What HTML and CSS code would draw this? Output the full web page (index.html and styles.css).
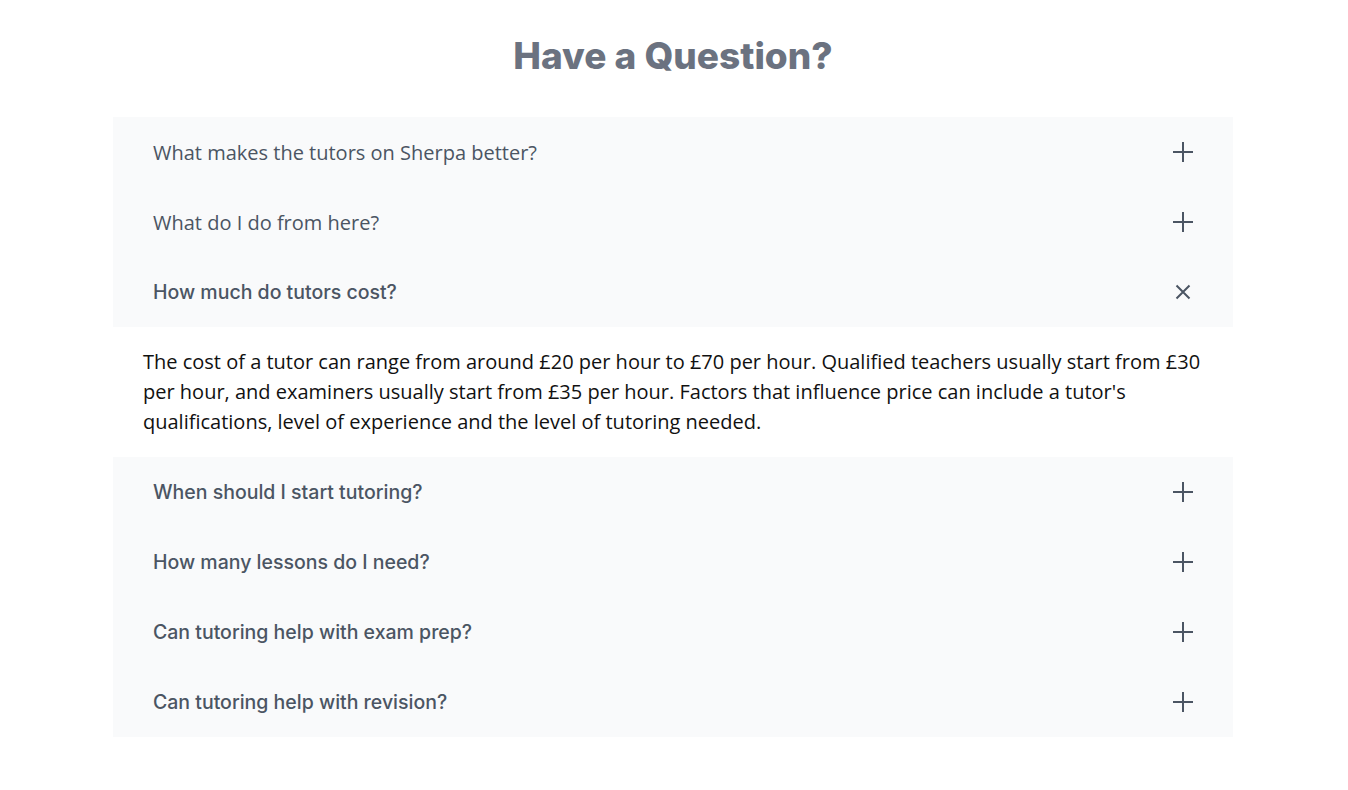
FILE: index.html
```html
<!DOCTYPE html>
<html lang="en">
<head>
<meta charset="utf-8">
<title>Have a Question?</title>
<link rel="stylesheet" href="styles.css">
</head>
<body>
<section class="faq">
  <h2 class="faq-title">Have a Question?</h2>
  <div class="faq-list">
    <div class="faq-item">
      <span class="q q-open">What makes the tutors on Sherpa better?</span>
      <svg class="icon" viewBox="0 0 20 20"><path d="M10 0v20M0 10h20"/></svg>
    </div>
    <div class="faq-item">
      <span class="q q-open">What do I do from here?</span>
      <svg class="icon" viewBox="0 0 20 20"><path d="M10 0v20M0 10h20"/></svg>
    </div>
    <div class="faq-item">
      <span class="q">How much do tutors cost?</span>
      <svg class="icon" viewBox="0 0 20 20"><path d="M3.5 3.5l13 13M16.5 3.5l-13 13"/></svg>
    </div>
    <div class="faq-answer">
      <p>The cost of a tutor can range from around £20 per hour to £70 per hour. Qualified teachers usually start from £30 per hour, and examiners usually start from £35 per hour. Factors that influence price can include a tutor's qualifications, level of experience and the level of tutoring needed.</p>
    </div>
    <div class="faq-item">
      <span class="q">When should I start tutoring?</span>
      <svg class="icon" viewBox="0 0 20 20"><path d="M10 0v20M0 10h20"/></svg>
    </div>
    <div class="faq-item">
      <span class="q">How many lessons do I need?</span>
      <svg class="icon" viewBox="0 0 20 20"><path d="M10 0v20M0 10h20"/></svg>
    </div>
    <div class="faq-item">
      <span class="q">Can tutoring help with exam prep?</span>
      <svg class="icon" viewBox="0 0 20 20"><path d="M10 0v20M0 10h20"/></svg>
    </div>
    <div class="faq-item">
      <span class="q">Can tutoring help with revision?</span>
      <svg class="icon" viewBox="0 0 20 20"><path d="M10 0v20M0 10h20"/></svg>
    </div>
  </div>
</section>
</body>
</html>
```
FILE: styles.css
```css
* { box-sizing: border-box; }
body {
  margin: 0;
  background: #ffffff;
  font-family: "Open Sans", "Liberation Sans", sans-serif;
}
.faq {
  width: 1120px;
  margin: 0 auto;
  padding-top: 36px;
  position: relative;
  left: -1px;
}
.faq-title {
  margin: 0 0 41px;
  text-align: center;
  font-family: Inter, "Open Sans", sans-serif;
  font-weight: 800;
  font-size: 37px;
  line-height: 40px;
  color: #6b7280;
}
.faq-item {
  height: 70px;
  background: #f9fafb;
  display: flex;
  align-items: center;
  justify-content: space-between;
  padding: 0 40px;
}
.q {
  font-family: Inter, "Open Sans", sans-serif;
  font-weight: 500;
  font-size: 19.5px;
  color: #4b5563;
}
.q-open {
  font-family: "Open Sans", sans-serif;
  font-weight: 400;
  font-size: 20px;
}
.icon {
  width: 20px;
  height: 20px;
  fill: none;
  stroke: #4b5563;
  stroke-width: 2;
}
.faq-answer {
  padding: 20px 30px;
}
.faq-answer p {
  margin: 0;
  font-size: 20px;
  line-height: 30px;
  color: #111111;
}
```
